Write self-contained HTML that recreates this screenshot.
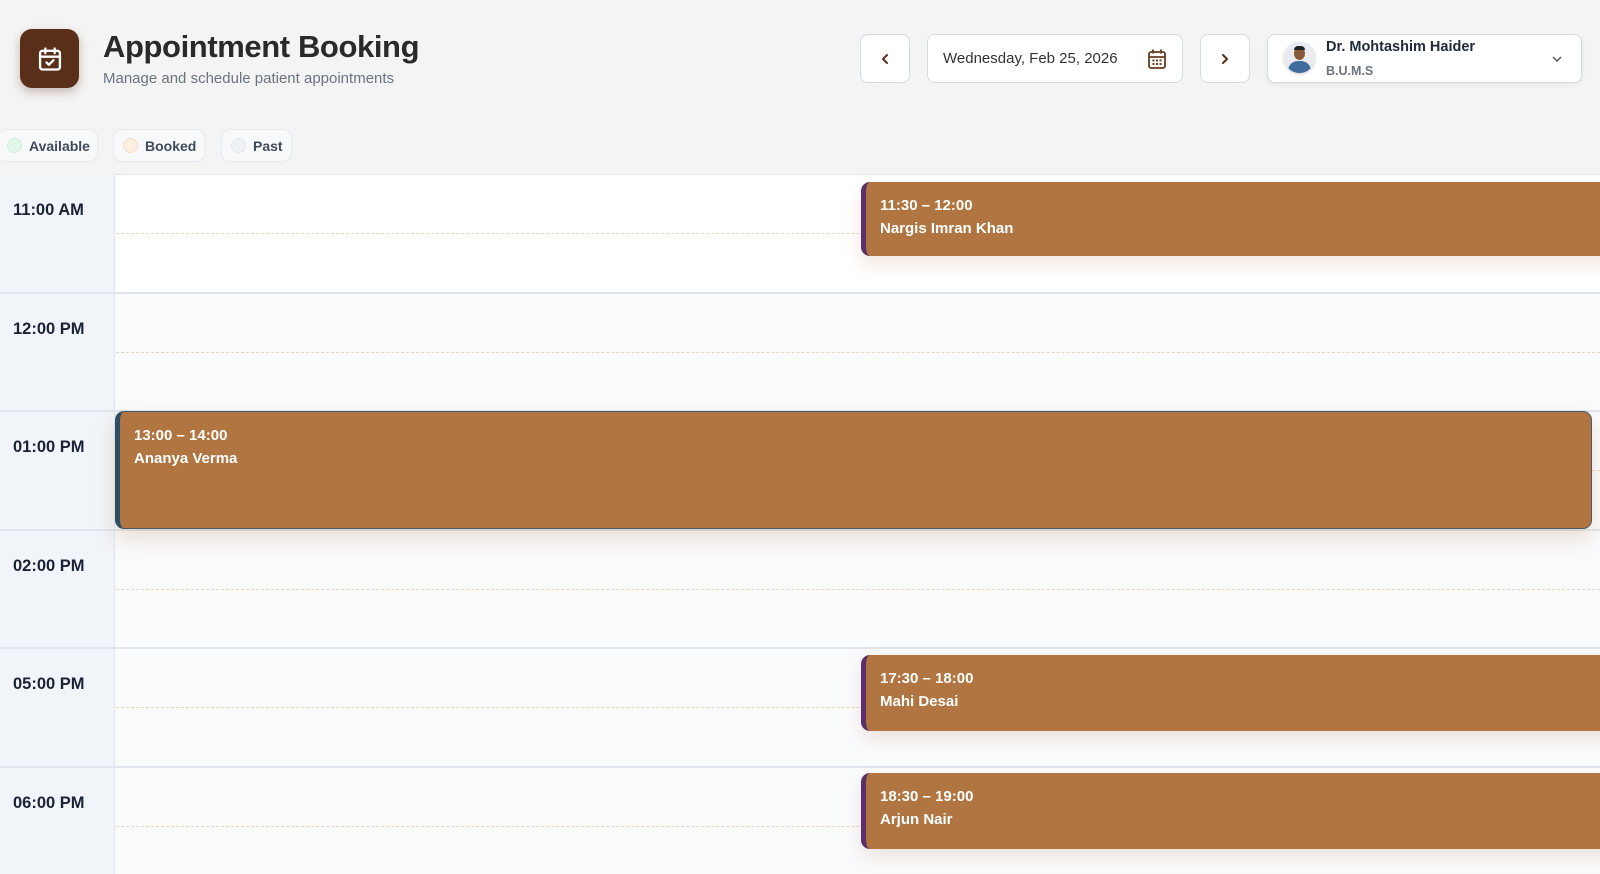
<!DOCTYPE html>
<html><head><meta charset="utf-8"><style>
*{box-sizing:border-box;margin:0;padding:0}
body{width:1600px;height:831px;overflow:hidden;background:#f4f4f4;font-family:"Liberation Sans",sans-serif;position:relative;color:#1f2937}
.abs{position:absolute}
.logo{left:20px;top:29px;width:59px;height:59px;border-radius:12px;background:#5a2f1a;box-shadow:0 4px 10px rgba(90,47,26,.3);display:flex;align-items:center;justify-content:center}
h1{position:absolute;left:103px;top:29px;font-size:31px;font-weight:700;color:#2a2a2a;letter-spacing:-0.4px}
.sub{left:103px;top:70px;font-size:15px;color:#6b7280}
.btn{background:#fff;border:1.5px solid #d5dbe3;border-radius:8px;top:34px;height:49px}
.pill{top:129px;height:33px;background:#f8f9fb;border:1px solid #e6e9ee;border-radius:9px;font-size:14px;font-weight:700;color:#3f4a5c;display:flex;align-items:center;padding-left:9px}
.dot{width:15px;height:15px;border-radius:50%;margin-right:7px}
.grid{left:0;top:174px;width:1600px;height:700px;background:#fafbfd;border-top:1px solid #e2e8f0}
.tcol{left:0;top:174px;width:115px;height:700px;background:#f1f4f9;border-right:1.5px solid #dfe6ef}
.row{left:0;width:1600px;height:1.5px;background:#dfe6ef}
.dash{left:116px;width:1484px;border-top:1.5px dashed #ecd5bd}
.tl{left:13px;font-size:16.5px;font-weight:700;color:#1a2233}
.card{background:#b07540;border-radius:9px;color:#fff;padding:12px 0 0 14px;font-size:15px;font-weight:700;line-height:23px;box-shadow:0 8px 18px rgba(176,117,64,.18)}
</style></head><body>
<div class="abs logo"><svg width="28" height="28" viewBox="0 0 24 24" fill="none" stroke="#fff" stroke-width="2" stroke-linecap="round" stroke-linejoin="round"><rect x="3.5" y="5" width="17" height="16" rx="2"/><path d="M8 3v4M16 3v4M3.5 10h17M9 15l2 2 4-4"/></svg></div>
<h1>Appointment Booking</h1>
<div class="abs sub">Manage and schedule patient appointments</div>

<div class="abs btn" style="left:860px;width:50px;display:flex;align-items:center;justify-content:center"><svg width="14" height="14" viewBox="0 0 14 14"><path d="M9 3L5 7l4 4" stroke="#5a2f1a" stroke-width="2" fill="none" stroke-linecap="round" stroke-linejoin="round"/></svg></div>
<div class="abs btn" style="left:927px;width:256px"><span class="abs" style="left:15px;top:15px;font-size:15px;color:#333">Wednesday, Feb 25, 2026</span>
<svg class="abs" style="left:218px;top:12px" width="22" height="24" viewBox="0 0 22 24" fill="none" stroke="#6b3a1f" stroke-width="1.8"><rect x="3" y="5" width="16" height="16" rx="2"/><path d="M3 10h16M7 2.5v4M15 2.5v4"/><g fill="#6b3a1f" stroke="none"><rect x="6.5" y="12.5" width="2" height="2"/><rect x="10" y="12.5" width="2" height="2"/><rect x="13.5" y="12.5" width="2" height="2"/><rect x="6.5" y="16" width="2" height="2"/><rect x="10" y="16" width="2" height="2"/><rect x="13.5" y="16" width="2" height="2"/></g></svg></div>
<div class="abs btn" style="left:1200px;width:50px;display:flex;align-items:center;justify-content:center"><svg width="14" height="14" viewBox="0 0 14 14"><path d="M5 3l4 4-4 4" stroke="#5a2f1a" stroke-width="2" fill="none" stroke-linecap="round" stroke-linejoin="round"/></svg></div>
<div class="abs btn" style="left:1267px;width:315px;box-shadow:0 2px 6px rgba(0,0,0,.06)">
<div class="abs" style="left:16px;top:7px;width:31px;height:31px;border-radius:50%;background:#e8ecf0;overflow:hidden;box-shadow:0 1px 3px rgba(0,0,0,.2)"><div class="abs" style="left:10px;top:5px;width:11px;height:13px;border-radius:50%;background:#8a5a3c"></div><div class="abs" style="left:10px;top:4px;width:11px;height:4px;border-radius:5px 5px 0 0;background:#222"></div><div class="abs" style="left:4px;top:19px;width:23px;height:14px;border-radius:10px 10px 0 0;background:#3f6c9a"></div></div>
<span class="abs" style="left:58px;top:4px;font-size:14.5px;font-weight:700;color:#1f2937">Dr. Mohtashim Haider</span>
<span class="abs" style="left:58px;top:29px;font-size:12.5px;font-weight:700;color:#6b7280">B.U.M.S</span>
<svg class="abs" style="left:283px;top:18px" width="12" height="12" viewBox="0 0 12 12"><path d="M2 4l4 4 4-4" stroke="#555" stroke-width="1.4" fill="none"/></svg></div>

<div class="abs pill" style="left:-3px;width:101px"><span class="dot" style="background:#e3f6ea;border:1px solid #cdeed9"></span>Available</div>
<div class="abs pill" style="left:113px;width:92px"><span class="dot" style="background:#fdeee0;border:1px solid #f7dcc4"></span>Booked</div>
<div class="abs pill" style="left:221px;width:71px"><span class="dot" style="background:#eef1f5;border:1px solid #e3e7ed"></span>Past</div>

<div class="abs grid"></div>
<div class="abs" style="left:116px;top:175px;width:1484px;height:118px;background:#fff"></div>
<div class="abs tcol"></div>
<div class="abs row" style="top:292px"></div>
<div class="abs row" style="top:410px"></div>
<div class="abs row" style="top:529px"></div>
<div class="abs row" style="top:647px"></div>
<div class="abs row" style="top:766px"></div>
<div class="abs dash" style="top:233px"></div>
<div class="abs dash" style="top:352px"></div>
<div class="abs dash" style="top:470px"></div>
<div class="abs dash" style="top:589px"></div>
<div class="abs dash" style="top:707px"></div>
<div class="abs dash" style="top:826px"></div>
<div class="abs tl" style="top:201px">11:00 AM</div>
<div class="abs tl" style="top:320px">12:00 PM</div>
<div class="abs tl" style="top:438px">01:00 PM</div>
<div class="abs tl" style="top:557px">02:00 PM</div>
<div class="abs tl" style="top:675px">05:00 PM</div>
<div class="abs tl" style="top:794px">06:00 PM</div>

<div class="abs card" style="left:861px;top:182px;width:760px;height:74px;border-left:5px solid #5b2f6a">11:30 – 12:00<br>Nargis Imran Khan</div>
<div class="abs card" style="left:115px;top:411px;width:1477px;height:118px;border:1px solid #4a5a66;border-left:5px solid #2d4f66;box-shadow:0 10px 22px rgba(176,117,64,.22)">13:00 – 14:00<br>Ananya Verma</div>
<div class="abs card" style="left:861px;top:655px;width:760px;height:76px;border-left:5px solid #5b2f6a">17:30 – 18:00<br>Mahi Desai</div>
<div class="abs card" style="left:861px;top:773px;width:760px;height:76px;border-left:5px solid #5b2f6a">18:30 – 19:00<br>Arjun Nair</div>
</body></html>
